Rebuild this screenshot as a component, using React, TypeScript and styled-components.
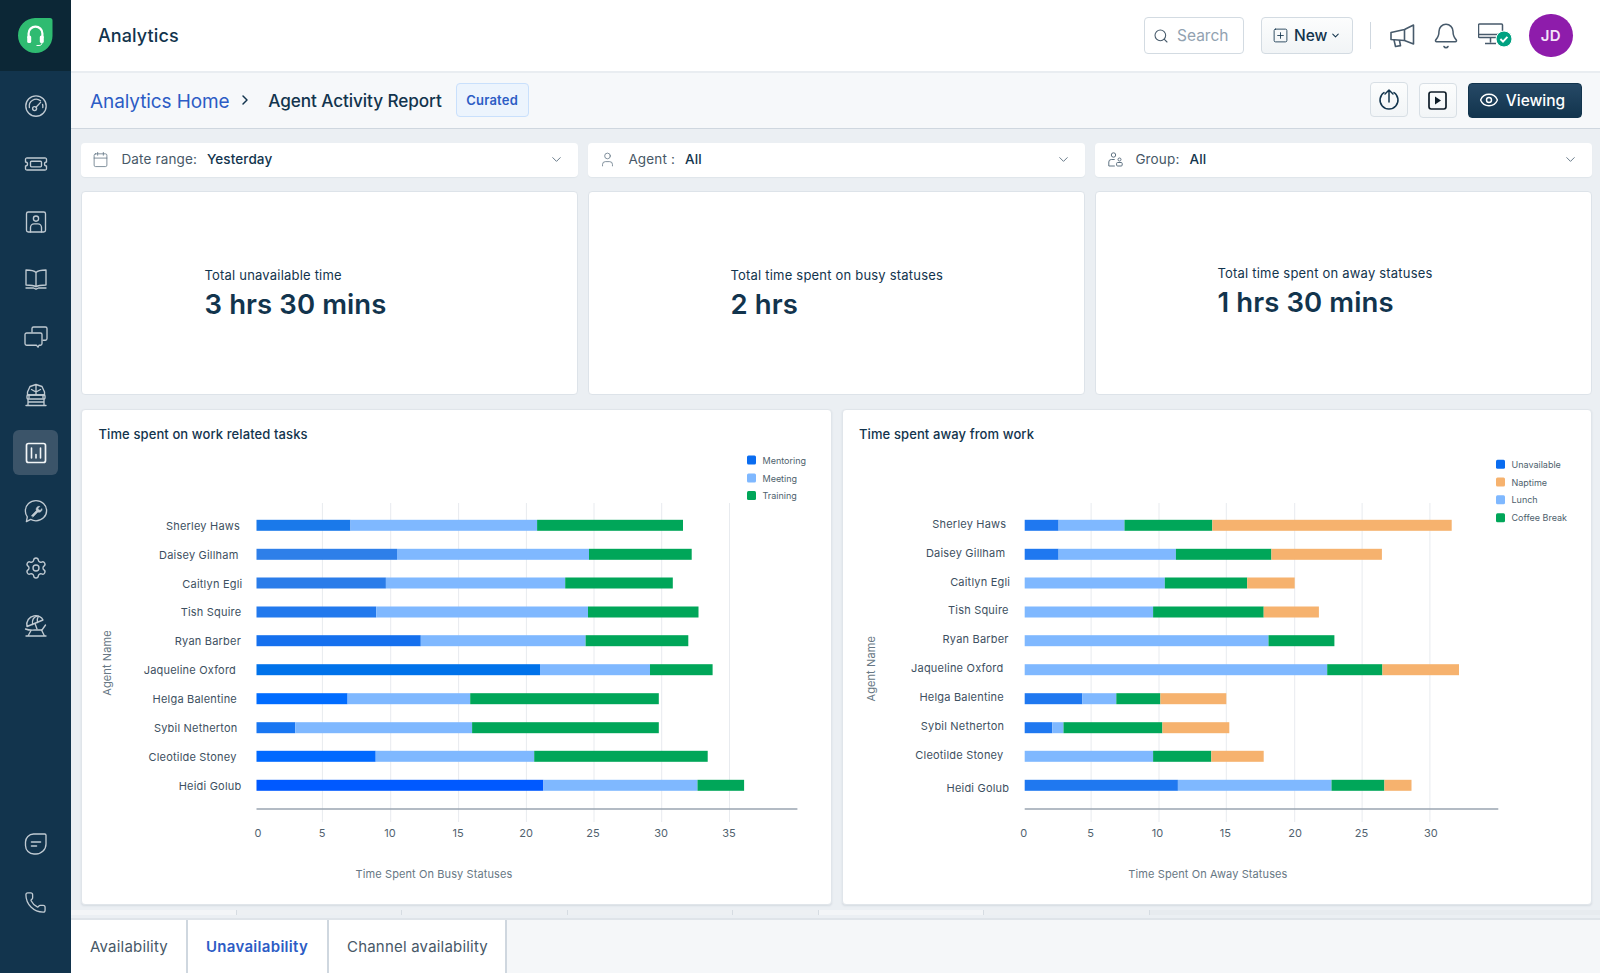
import React from "react";
import styled, { createGlobalStyle } from "styled-components";
import { Search, SquarePlus, ChevronDown, ChevronRight, Bell, Eye, Calendar, User, Settings, Phone } from "lucide-react";

const Global = createGlobalStyle`
  html, body { margin: 0; padding: 0; height: 100%; overflow: hidden; }
  body { font-family: Inter, "Liberation Sans", sans-serif; color: #12344d; background: #ebeff3; -webkit-font-smoothing: antialiased; }
  * { box-sizing: border-box; }
`;

const Shell = styled.div`display: flex; width: 1600px; height: 973px; overflow: hidden;`;
const Sidebar = styled.aside`width: 71px; flex: none; background: #12344d; display: flex; flex-direction: column; align-items: center;`;
const LogoBox = styled.div`width: 100%; height: 71px; flex: none; background: #0c2736; display: flex; align-items: center; justify-content: center;`;
const NavList = styled.nav`display: flex; flex-direction: column; align-items: center; gap: 12.8px; padding-top: 12.5px;`;
const NavFoot = styled.nav`margin-top: auto; display: flex; flex-direction: column; align-items: center; gap: 14px; padding-bottom: 48px;`;
const NavItem = styled.div<{ $active?: boolean }>`
  width: 45px; height: 45px; border-radius: 6px; display: flex; align-items: center; justify-content: center;
  color: ${p => (p.$active ? "#f2f5f7" : "#c0cad2")};
  background: ${p => (p.$active ? "#3b5469" : "transparent")};
`;

const Main = styled.main`flex: 1; min-width: 0; display: flex; flex-direction: column; height: 973px;`;
const TopBar = styled.header`height: 73px; flex: none; background: #fff; border-bottom: 2px solid #e9edf1; display: flex; align-items: center; padding: 0 27.5px 0 27px;`;
const AppTitle = styled.h1`margin: 0; font-size: 18px; font-weight: 500; letter-spacing: 0.1px; color: #12344d;`;
const TopRight = styled.div`margin-left: auto; display: flex; align-items: center;`;
const SearchBox = styled.div`width: 99.5px; height: 36.5px; border: 1px solid #d3dbe2; border-radius: 4px; display: flex; align-items: center; gap: 8px; padding-left: 8px; font-size: 15.5px; color: #92a2b1; background: #fff; margin-right: 17.5px;`;
const NewButton = styled.div`width: 92px; height: 36.5px; border: 1px solid #d3dbe2; border-radius: 4px; display: flex; align-items: center; padding-left: 10px; gap: 5px; font-size: 15.5px; font-weight: 500; color: #12344d; background: linear-gradient(#fcfdfd, #f1f4f6);`;
const Divider = styled.div`width: 1px; height: 27px; background: #cfd7df; margin: 0 19px 0 17px;`;
const TopIcon = styled.div<{ $gap: number }>`display: flex; color: #475a6b; margin-right: ${p => p.$gap}px;`;
const Avatar = styled.div`width: 43.5px; height: 43.5px; border-radius: 50%; background: #8e1cab; color: #f4e4f8; display: flex; align-items: center; justify-content: center; font-size: 15px; font-weight: 600; letter-spacing: 0.3px;`;

const SubHeader = styled.div`height: 55.5px; flex: none; background: #f6f8fa; border-bottom: 1px solid #cfd7df; display: flex; align-items: center; padding: 0 18px 0 19px;`;
const Crumb = styled.a`font-size: 19px; color: #2c5cc5; letter-spacing: -0.1px; margin-top: 2px;`;
const CrumbSep = styled.span`display: flex; color: #12344d; margin: 0 15.3px 0 7.5px;`;
const PageTitle = styled.span`font-size: 17.2px; font-weight: 500; color: #12344d; letter-spacing: -0.1px;`;
const Curated = styled.span`margin-left: 14px; height: 34px; width: 73px; border: 1px solid #c9e0fc; border-radius: 4px; background: #ecf4fd; display: flex; align-items: center; justify-content: center; font-size: 13px; font-weight: 600; letter-spacing: 0.2px; color: #2c5cc5;`;
const Actions = styled.div`margin-left: auto; display: flex; align-items: center;`;
const IconButton = styled.div<{ $gap: number; $raised?: boolean }>`width: 38px; height: 35.5px; border: 1px solid #d8dfe5; border-radius: 4px; display: flex; align-items: center; justify-content: center; color: #12344d; background: linear-gradient(#fcfdfd, #f2f5f7); margin-right: ${p => p.$gap}px; margin-bottom: ${p => (p.$raised ? 2 : 0)}px;`;
const ViewButton = styled.div`width: 114px; height: 35.5px; border: 1px solid #12344d; border-radius: 4px; background: linear-gradient(#264966, #12344d); color: #fff; display: flex; align-items: center; justify-content: center; gap: 7px; font-size: 15.5px; font-weight: 500; padding-right: 6px;`;

const Content = styled.div`flex: 1; min-height: 0; padding: 14px 8px 0 10px; display: flex; flex-direction: column;`;
const ThreeCols = styled.div`display: grid; grid-template-columns: repeat(3, 497px); column-gap: 10px;`;
const Filter = styled.div`height: 34.5px; background: #fff; border-radius: 4px; display: flex; align-items: center; padding: 0 14px 1px 11px; font-size: 13.5px; color: #475867; box-shadow: 0 1px 1px rgba(18,52,77,.05);`;
const FilterIcon = styled.span`display: flex; color: #5f7282; margin-right: 12.4px;`;
const FilterLabel = styled.span`margin-right: 10px; letter-spacing: 0.15px;`;
const FilterValue = styled.span`font-weight: 500; color: #12344d; letter-spacing: 0.1px;`;
const FilterChevron = styled.span`margin-left: auto; display: flex; color: #5f7282;`;

const KpiRow = styled(ThreeCols)`margin-top: 14px;`;
const KpiCard = styled.div<{ $left: number; $lift?: number }>`
  height: 203.5px; background: #fff; border: 1px solid #dde3e9; border-radius: 4px; display: flex; flex-direction: column; justify-content: center;
  padding: 3px 0 ${p => p.$lift ?? 0}px ${p => p.$left}px;
`;
const KpiLabel = styled.div`font-size: 13px; line-height: 16px; letter-spacing: 0.2px; color: #12344d;`;
const KpiValue = styled.div`font-size: 27.5px; line-height: 34px; font-weight: 600; color: #12344d; margin-top: 4px; letter-spacing: 0.1px;`;

const ChartRow = styled.div`display: grid; grid-template-columns: 750.5px 750.5px; column-gap: 10px; margin-top: 14px;`;
const ChartCard = styled.section`height: 496.5px; background: #fff; border: 1px solid #e0e5ea; border-radius: 4px; box-shadow: 0 1px 2px rgba(18,52,77,.1); display: flex; flex-direction: column;`;
const ChartTitle = styled.h3`margin: 0; height: 33px; flex: none; padding: 15px 0 0 16.5px; font-size: 13px; line-height: 18px; font-weight: 500; letter-spacing: 0.1px; color: #12344d;`;
const ChartSvg = styled.svg`display: block; flex: none; width: 748.5px; height: 461.5px;`;
const NameText = styled.text`font-size: 11px; fill: #3d5061; letter-spacing: 0.2px;`;
const TickText = styled.text`font-size: 11px; fill: #51626f;`;
const AxisTitle = styled.text`font-size: 11px; fill: #677784; letter-spacing: 0.1px;`;
const LegendText = styled.text`font-size: 9px; fill: #4e5f6d;`;

const Peek = styled.div`height: 5px; margin: 5px -8px 0 -10px; display: flex; background: #e7ebef;`;
const PeekCell = styled.div<{ $w: number; $light?: boolean }>`width: ${p => p.$w}px; border-right: 1px solid #d6dce2; background: ${p => (p.$light ? "#f3f5f7" : "#edf0f3")};`;

const TabBar = styled.div`height: 55px; flex: none; background: #f5f7f9; border-top: 2px solid #dfe4e9; display: flex;`;
const Tab = styled.div<{ $active?: boolean; $w: number }>`
  width: ${p => p.$w}px; background: #fff; border-right: 2px solid #cfd7df; display: flex; align-items: center; padding-left: 19px;
  font-size: 15px; padding-bottom: 1px;
  letter-spacing: ${p => (p.$active ? 0.3 : 0.2)}px;
  font-weight: ${p => (p.$active ? 600 : 400)};
  color: ${p => (p.$active ? "#2c5cc5" : "#475867")};
  & + & { padding-left: 18px; }
`;

const NavSvg: React.FC<{ children: React.ReactNode }> = ({ children }) => (
  <svg width="24" height="24" viewBox="0 0 24 24" fill="none" stroke="currentColor" strokeWidth="1.35" strokeLinecap="round" strokeLinejoin="round">{children}</svg>
);

const navIcons = [
  <NavSvg><circle cx="12" cy="12" r="10.2" /><path d="M5.4 13.5A6.9 6.9 0 0 1 16.5 6.8M18.6 10.5a6.9 6.9 0 0 1 .2 3" /><circle cx="10.6" cy="14.6" r="2" /><path d="M12 13.2 16.6 8.4" /></NavSvg>,
  <NavSvg><path d="M3.5 6h17A1.5 1.5 0 0 1 22.5 7.5V10a2 2 0 0 0 0 4v2.5A1.5 1.5 0 0 1 20.5 18h-17a1.5 1.5 0 0 1-2-1.5V14a2 2 0 0 0 0-4V7.5A1.5 1.5 0 0 1 3.5 6Z" /><rect x="6.5" y="9.2" width="11" height="5.6" rx="1" /></NavSvg>,
  <NavSvg><rect x="2.5" y="2" width="19" height="20" rx="1.8" /><circle cx="12" cy="8.6" r="2.6" /><path d="M6.5 22v-4.5a3.6 3.6 0 0 1 3.6-3.6h3.8a3.6 3.6 0 0 1 3.6 3.6V22" /></NavSvg>,
  <NavSvg><path d="M12 5.5C10 3.4 6.5 3 2 3v15c4.5 0 8 .4 10 1.8 2-1.4 5.5-1.8 10-1.8V3c-4.5 0-8 .4-10 2.5ZM12 5.5v14" /><path d="M2 21h7.5l2.5 1.2 2.5-1.2H22" /></NavSvg>,
  <NavSvg><path d="M8 7V3.6A1.6 1.6 0 0 1 9.6 2h11.8A1.6 1.6 0 0 1 23 3.6v10A1.6 1.6 0 0 1 21.4 15.2H19" /><path d="M2.6 8h13.8A1.6 1.6 0 0 1 18 9.6v9a1.6 1.6 0 0 1-1.6 1.6H15l-1 2-1.6-2H2.6A1.6 1.6 0 0 1 1 18.6v-9A1.6 1.6 0 0 1 2.6 8Z" /></NavSvg>,
  <NavSvg><path d="M12 1.5 6 3.5 3.5 9v3h17V9L18 3.5Zm0 0V12M7.5 6.5 12 9l4.5-2.5" /><rect x="3" y="12" width="18" height="4" rx="1" /><path d="M5 12v3M19 12v3" /><path d="M2 22.5h20M4 16v6.5M20 16v6.5M4 19h16" /></NavSvg>,
  <NavSvg><rect x="2.5" y="2.5" width="19" height="19" rx="2" strokeWidth="1.7" /><path d="M7.5 7v10M12 13.5V17M16.5 7v10" strokeWidth="1.6" /></NavSvg>,
  <NavSvg><path d="M12 1.6c5.9 0 10.6 4.5 10.6 10.1S17.9 21.8 12 21.8c-2 0-3.8-.5-5.3-1.4L2.4 22.6l.9-4.7A9.8 9.8 0 0 1 1.4 11.7C1.4 6.1 6.1 1.6 12 1.6Z" /><path d="M7.6 16.6 12.4 11.6a3 3 0 0 1 3.4-4.2l-1.8 1.9.6 1.5 1.6.5 1.8-1.7a3 3 0 0 1-4.1 3.4L9 17.9Z" fill="currentColor" strokeWidth=".6" /></NavSvg>,
  <Settings size={24} strokeWidth={1.35} />,
  <NavSvg><path d="M3 12.5C1.8 7.2 5.3 2.7 10 1.8c4.2-.7 7.8 1.4 9 4.2Z" /><path d="M8.6 10.6C8 7.2 9 3.5 13 2.2M13.5 8.5c-.6-2.4 0-5 .9-6.2" /><path d="M11 9.6 13 15" /><path d="M1.5 15c3 1.2 6 1.3 9.5 1h7l3.5-5" /><path d="M7 16.5 4 22M17.5 16l3 6M2 22h20" /></NavSvg>,
];

const BubbleIcon = () => <NavSvg><path d="M9.5 2h11.2A1.3 1.3 0 0 1 22 3.3V12a10 10 0 0 1-10 10h-2A8.5 8.5 0 0 1 1.5 13.5v-3.4A8.1 8.1 0 0 1 9.5 2Z" /><path d="M7.5 10h9M7.5 14h5" strokeWidth="1.6" /></NavSvg>;

const Logo = () => (
  <svg width="35" height="35" viewBox="0 0 35 35">
    <path d="M17 0H32Q34.5 0 34.5 2.5V18A17 17 0 0 1 17.5 35A17.5 17.5 0 0 1 0 17.5A17.5 17.5 0 0 1 17 0Z" fill="#2fbb71" />
    <path d="M10.6 20v-4.5a6.9 6.9 0 0 1 13.8 0V20" fill="none" stroke="#fff" strokeWidth="2.2" />
    <rect x="9.2" y="17.5" width="4" height="7.5" rx="1.6" fill="#fff" />
    <rect x="21.8" y="17.5" width="4" height="7.5" rx="1.6" fill="#fff" />
    <path d="M24 25c0 1.6-1.4 2.5-3 2.5h-2.5" fill="none" stroke="#fff" strokeWidth="1" />
  </svg>
);

const Megaphone = () => (
  <svg width="25" height="24" viewBox="0 0 25 24" fill="none" stroke="currentColor" strokeWidth="1.6" strokeLinejoin="round"><path d="M1 8.5 14.5 5.5 23.5 1v19L14.5 16.5 1 15.5Z" /><path d="M14.5 5.5v11M4 15.8 5.5 22.5l5-.9L9.4 16" /></svg>
);
const MonitorCheck = () => (
  <svg width="34" height="26" viewBox="0 0 34 26" fill="none"><path d="M22 14.5H1.5a1 1 0 0 1-1-1V2a1 1 0 0 1 1-1h22a1 1 0 0 1 1 1v7" stroke="#475a6b" strokeWidth="1.5" /><path d="M.8 11.5H20M12.5 15v4.5M7 20.5h11" stroke="#475a6b" strokeWidth="1.5" /><circle cx="26" cy="16" r="8" fill="#00a181" stroke="#fff" strokeWidth="1" /><path d="m22.4 16 2.6 2.6 4.4-4.8" stroke="#fff" strokeWidth="1.9" fill="none" /></svg>
);
const UploadIcon = () => (
  <svg width="22" height="22" viewBox="0 0 22 22" fill="none" stroke="currentColor" strokeWidth="1.5" strokeLinecap="round" strokeLinejoin="round"><path d="M6 4.5A9 9 0 1 0 16 4.5" /><path d="M11 14V2M7 6l4-4 4 4" /></svg>
);
const PlayIcon = () => (
  <svg width="19" height="19" viewBox="0 0 19 19"><rect x="1" y="1" width="17" height="17" rx="2.2" fill="none" stroke="#0f1d28" strokeWidth="1.7" /><path d="M7 5.5 13 9.5 7 13.5Z" fill="#0f1d28" /></svg>
);
const GroupIcon = () => (
  <svg width="17" height="15" viewBox="-2 0 17 15" fill="none" stroke="currentColor" strokeWidth="1"><circle cx="5.5" cy="3" r="2.2" /><path d="M.8 14V10a2.5 2.5 0 0 1 2.5-2.5h3.4" /><path d="M.8 14h6" /><circle cx="11.5" cy="7.5" r="1.5" /><rect x="8.6" y="10.5" width="5.6" height="3.5" rx="1" /></svg>
);

type Row = { name: string; end: number; y: number; segs: [string, number][] };
const M = "#7fb8ff", G = "#00a659", O = "#f6b26e";
const barY = [525.3, 554.3, 583, 612, 640.7, 669.7, 698.7, 727.7, 756.3, 785.3];

const busyRows: Row[] = [
  { name: "Sherley Haws", end: 240, y: 526, segs: [["#1a79ea", 350.5], [M, 537.1], [G, 683]] },
  { name: "Daisey Gillham", end: 238.5, y: 555, segs: [["#2e7fe9", 397], [M, 589], [G, 691.7]] },
  { name: "Caitlyn Egli", end: 242.4, y: 583.7, segs: [["#2a7ce9", 385.9], [M, 565.2], [G, 672.8]] },
  { name: "Tish Squire", end: 241.4, y: 612.3, segs: [["#2279ed", 376.2], [M, 588], [G, 698.5]] },
  { name: "Ryan Barber", end: 241, y: 641.3, segs: [["#1570ee", 420.8], [M, 585.6], [G, 688.3]] },
  { name: "Jaqueline Oxford", end: 236, y: 670.3, segs: [["#0072ea", 540], [M, 650], [G, 712.6]] },
  { name: "Helga Balentine", end: 237, y: 699.3, segs: [["#006cff", 347.6], [M, 470.2], [G, 658.8]] },
  { name: "Sybil Netherton", end: 237.5, y: 728, segs: [["#1876f2", 295.2], [M, 472.1], [G, 658.8]] },
  { name: "Cleotilde Stoney", end: 236.6, y: 757, segs: [["#0069ff", 375.7], [M, 534.2], [G, 707.7]] },
  { name: "Heidi Golub", end: 241.4, y: 785.7, segs: [["#0059ff", 543.4], [M, 697.5], [G, 744.1]] },
];
const B2 = "#1f78f0";
const awayRows: Row[] = [
  { name: "Sherley Haws", end: 1005.8, y: 523.7, segs: [[B2, 1058.1], [M, 1124], [G, 1211.8], [O, 1451.2]] },
  { name: "Daisey Gillham", end: 1004.8, y: 552.7, segs: [[B2, 1058.1], [M, 1175.4], [G, 1270.9], [O, 1381.4]] },
  { name: "Caitlyn Egli", end: 1009.7, y: 581.7, segs: [[M, 1164.3], [G, 1246.7], [O, 1294.2]] },
  { name: "Tish Squire", end: 1008.2, y: 610.3, segs: [[M, 1152.6], [G, 1263.2], [O, 1318.4]] },
  { name: "Ryan Barber", end: 1008.2, y: 639.3, segs: [[M, 1268], [G, 1333.9]] },
  { name: "Jaqueline Oxford", end: 1002.9, y: 668.3, segs: [[M, 1326.7], [G, 1381.9], [O, 1458.5]] },
  { name: "Helga Balentine", end: 1003.4, y: 697, segs: [[B2, 1081.9], [M, 1115.8], [G, 1159.9], [O, 1225.8]] },
  { name: "Sybil Netherton", end: 1003.8, y: 726, segs: [[B2, 1051.8], [M, 1063], [G, 1161.9], [O, 1228.8]] },
  { name: "Cleotilde Stoney", end: 1002.9, y: 755, segs: [[M, 1152.6], [G, 1210.8], [O, 1263.2]] },
  { name: "Heidi Golub", end: 1008.7, y: 787.7, segs: [[B2, 1177.4], [M, 1331], [G, 1383.9], [O, 1411]] },
];

type ChartProps = {
  title: string; originX: number; left: number; rows: Row[]; grid: number[]; ticks: [string, number][];
  axisEnd: number; axisTitle: string; axisTitleX: number; agentX: number; agentY: number;
  legend: { label: string; color: string; y: number }[]; legendX: number;
};

const Chart: React.FC<ChartProps> = ({ title, originX, left, rows, grid, ticks, axisEnd, axisTitle, axisTitleX, agentX, agentY, legend, legendX }) => (
  <ChartCard>
    <ChartTitle>{title}</ChartTitle>
    <ChartSvg viewBox={`${left} 443 748.5 461.5`}>
      {grid.map(x => <line key={x} x1={x} x2={x} y1={503} y2={822} stroke="#e8ebef" strokeWidth="1" />)}
      {rows.map((r, i) => {
        let from = originX;
        return (
          <g key={r.name}>
            <NameText x={r.end} y={r.y} textAnchor="end" dominantBaseline="central">{r.name}</NameText>
            {r.segs.map(([c, to]) => {
              const rect = <rect key={to} x={from} y={barY[i] - 5.5} width={to - from} height={11} fill={c} />;
              from = to;
              return rect;
            })}
          </g>
        );
      })}
      <line x1={originX} x2={axisEnd} y1={809} y2={809} stroke="#9aa5b1" strokeWidth="1.4" />
      {ticks.map(([t, x]) => <TickText key={t} x={x} y={833} textAnchor="middle" dominantBaseline="central">{t}</TickText>)}
      <AxisTitle x={axisTitleX} y={873.7} textAnchor="middle" dominantBaseline="central">{axisTitle}</AxisTitle>
      <AxisTitle x={agentX} y={agentY} textAnchor="middle" dominantBaseline="central" transform={`rotate(-90 ${agentX} ${agentY})`}>Agent Name</AxisTitle>
      {legend.map(l => (
        <g key={l.label}>
          <rect x={legendX} y={l.y - 4.5} width={9} height={9} rx={1.5} fill={l.color} />
          <LegendText x={legendX + 15.5} y={l.y} dominantBaseline="central">{l.label}</LegendText>
        </g>
      ))}
    </ChartSvg>
  </ChartCard>
);

export default function App() {
  return (
    <Shell>
      <Global />
      <Sidebar>
        <LogoBox><Logo /></LogoBox>
        <NavList>
          {navIcons.map((icon, i) => <NavItem key={i} $active={i === 6}>{icon}</NavItem>)}
        </NavList>
        <NavFoot>
          <NavItem><BubbleIcon /></NavItem>
          <NavItem><Phone size={23} strokeWidth={1.35} /></NavItem>
        </NavFoot>
      </Sidebar>
      <Main>
        <TopBar>
          <AppTitle>Analytics</AppTitle>
          <TopRight>
            <SearchBox><Search size={16} color="#475a6b" strokeWidth={1.6} />Search</SearchBox>
            <NewButton><SquarePlus size={17} strokeWidth={1.2} />New<ChevronDown size={11} strokeWidth={2.2} style={{ marginLeft: -2 }} /></NewButton>
            <Divider />
            <TopIcon $gap={17}><Megaphone /></TopIcon>
            <TopIcon $gap={17.5}><Bell size={28} strokeWidth={1.3} /></TopIcon>
            <TopIcon $gap={17.5}><MonitorCheck /></TopIcon>
            <Avatar>JD</Avatar>
          </TopRight>
        </TopBar>
        <SubHeader>
          <Crumb>Analytics Home</Crumb>
          <CrumbSep><ChevronRight size={16} strokeWidth={2.2} /></CrumbSep>
          <PageTitle>Agent Activity Report</PageTitle>
          <Curated>Curated</Curated>
          <Actions>
            <IconButton $gap={10.5} $raised><UploadIcon /></IconButton>
            <IconButton $gap={11.5}><PlayIcon /></IconButton>
            <ViewButton><Eye size={20} strokeWidth={1.7} />Viewing</ViewButton>
          </Actions>
        </SubHeader>
        <Content>
          <ThreeCols>
            <Filter>
              <FilterIcon><Calendar size={17} strokeWidth={1.1} /></FilterIcon>
              <FilterLabel>Date range:</FilterLabel>
              <FilterValue>Yesterday</FilterValue>
              <FilterChevron><ChevronDown size={15} strokeWidth={1.5} /></FilterChevron>
            </Filter>
            <Filter>
              <FilterIcon><User size={17} strokeWidth={1.1} /></FilterIcon>
              <FilterLabel>Agent :</FilterLabel>
              <FilterValue>All</FilterValue>
              <FilterChevron><ChevronDown size={15} strokeWidth={1.5} /></FilterChevron>
            </Filter>
            <Filter>
              <FilterIcon><GroupIcon /></FilterIcon>
              <FilterLabel>Group:</FilterLabel>
              <FilterValue>All</FilterValue>
              <FilterChevron><ChevronDown size={15} strokeWidth={1.5} /></FilterChevron>
            </Filter>
          </ThreeCols>
          <KpiRow>
            <KpiCard $left={122.5}><KpiLabel>Total unavailable time</KpiLabel><KpiValue>3 hrs 30 mins</KpiValue></KpiCard>
            <KpiCard $left={141.5}><KpiLabel>Total time spent on busy statuses</KpiLabel><KpiValue>2 hrs</KpiValue></KpiCard>
            <KpiCard $left={121.5} $lift={4}><KpiLabel>Total time spent on away statuses</KpiLabel><KpiValue>1 hrs 30 mins</KpiValue></KpiCard>
          </KpiRow>
          <ChartRow>
            <Chart
              title="Time spent on work related tasks" originX={256.5} left={82} rows={busyRows}
              grid={[322.4, 390.7, 458.6, 526.4, 594, 661.7, 729.5]}
              ticks={[["0", 258], ["5", 322], ["10", 390], ["15", 458], ["20", 526], ["25", 593], ["30", 661], ["35", 729]]}
              axisEnd={797.4} axisTitle="Time Spent On Busy Statuses" axisTitleX={434} agentX={106.7} agentY={663}
              legendX={747} legend={[{ label: "Mentoring", color: "#0a6cf0", y: 460 }, { label: "Meeting", color: M, y: 478 }, { label: "Training", color: G, y: 495.6 }]}
            />
            <Chart
              title="Time spent away from work" originX={1024.2} left={842.5} rows={awayRows}
              grid={[1090.6, 1158.5, 1225.8, 1294.2, 1361.6, 1429.4]}
              ticks={[["0", 1023.2], ["5", 1090], ["10", 1157], ["15", 1224.9], ["20", 1294.7], ["25", 1361], ["30", 1430.4]]}
              axisEnd={1497.8} axisTitle="Time Spent On Away Statuses" axisTitleX={1207.4} agentX={870.5} agentY={668.8}
              legendX={1495.5} legend={[{ label: "Unavailable", color: "#0a6cf0", y: 464.3 }, { label: "Naptime", color: O, y: 482 }, { label: "Lunch", color: M, y: 499.7 }, { label: "Coffee Break", color: G, y: 517.7 }]}
            />
          </ChartRow>
          <Peek>
            <PeekCell $w={166} $light />
            <PeekCell $w={165} />
            <PeekCell $w={166} />
            <PeekCell $w={165} />
            <PeekCell $w={86} />
            <PeekCell $w={165} $light />
            <PeekCell $w={166} />
          </Peek>
        </Content>
        <TabBar>
          <Tab $w={117}>Availability</Tab>
          <Tab $w={141} $active>Unavailability</Tab>
          <Tab $w={178}>Channel availability</Tab>
        </TabBar>
      </Main>
    </Shell>
  );
}
